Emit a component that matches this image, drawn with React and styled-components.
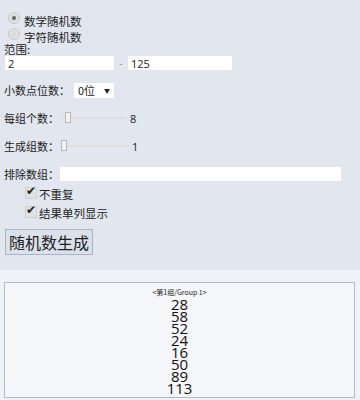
import styled, { createGlobalStyle } from "styled-components";

const GlobalStyle = createGlobalStyle`
  body {
    margin: 0;
    background: #eff2f6;
    font-family: "Noto Sans CJK SC", "Open Sans", sans-serif;
    font-size: 11px;
    color: #222;
  }
`;

const numbers = [28, 58, 52, 24, 16, 50, 89, 113];

const App = () => {
  return (
    <>
      <GlobalStyle />
      <Panel>
        <RadioLine>
          <Radio type="radio" name="kind" defaultChecked />
          数学随机数
        </RadioLine>
        <RadioLine>
          <Radio type="radio" name="kind" />
          字符随机数
        </RadioLine>
        <Label>范围:</Label>
        <RangeRow>
          <TextInput $width="111px" defaultValue="2" />
          <Dash>-</Dash>
          <TextInput $width="106px" defaultValue="125" />
        </RangeRow>
        <Row $top="11px">
          小数点位数：
          <Select>
            0位 <Arrow>▼</Arrow>
          </Select>
        </Row>
        <Row $top="12px">
          每组个数：
          <Slider $width="66px" type="range" min="1" max="100" defaultValue="8" />
          <Value>8</Value>
        </Row>
        <Row $top="12px">
          生成组数：
          <Slider $width="68px" type="range" min="1" max="100" defaultValue="1" />
          <Value>1</Value>
        </Row>
        <Row $top="12px">
          排除数组：
          <TextInput $width="283px" />
        </Row>
        <CheckLine $top="1px">
          <Check type="checkbox" defaultChecked />
          不重复
        </CheckLine>
        <CheckLine>
          <Check type="checkbox" defaultChecked />
          结果单列显示
        </CheckLine>
        <Button>随机数生成</Button>
      </Panel>
      <ResultArea>
        <ResultBox>
          <GroupTitle>&lt;第1组/Group 1&gt;</GroupTitle>
          {numbers.map((n, i) => (
            <Num key={i}>{n}</Num>
          ))}
        </ResultBox>
      </ResultArea>
    </>
  );
};

export default App;

const Panel = styled.div`
  background: #e1e6ef;
  height: 270px;
  box-sizing: border-box;
  padding: 13px 4px 0 4px;
`;

const RadioLine = styled.label`
  display: flex;
  align-items: center;
  height: 16px;
  font-size: 11.5px;
  margin-left: 4px;
`;

const Radio = styled.input`
  appearance: none;
  width: 12px;
  height: 12px;
  margin: 0 4px 0 0;
  border-radius: 50%;
  background: radial-gradient(circle, #d8d8d8 0, #e8e8e8 100%);
  border: 1px solid #c8c8c8;
  box-sizing: border-box;
  position: relative;
  top: -3px;
  &:checked::after {
    content: "";
    position: absolute;
    left: 3px;
    top: 3px;
    width: 4px;
    height: 4px;
    border-radius: 50%;
    background: #666;
  }
`;

const Label = styled.div`
  font-size: 11.5px;
  height: 14px;
  line-height: 14px;
  margin-top: -3px;
`;

const RangeRow = styled.div`
  display: flex;
  align-items: center;
  margin-top: -1px;
`;

const TextInput = styled.input`
  width: ${(p) => p.$width};
  height: 16px;
  box-sizing: border-box;
  border: 1px solid #e4e4ea;
  background: #fff;
  padding: 0 3px;
  font-family: "Open Sans", sans-serif;
  font-size: 11px;
  color: #222;
  outline: none;
`;

const Dash = styled.span`
  width: 12px;
  text-align: center;
  color: #999;
`;

const Row = styled.div`
  display: flex;
  align-items: center;
  margin-top: ${(p) => p.$top || "0"};
  height: 16px;
  font-size: 11px;
`;

const Select = styled.div`
  display: flex;
  align-items: center;
  justify-content: space-between;
  width: 40px;
  height: 15px;
  background: #fff;
  margin-left: 4px;
  padding: 0 4px;
  box-sizing: border-box;
  font-size: 11px;
`;

const Arrow = styled.span`
  font-size: 6px;
`;

const Slider = styled.input`
  appearance: none;
  width: ${(p) => p.$width};
  height: 14px;
  margin: 0 0 0 2px;
  background: transparent;
  &::-webkit-slider-runnable-track {
    height: 2px;
    background: #e3dcdc;
  }
  &::-webkit-slider-thumb {
    appearance: none;
    width: 6px;
    height: 11px;
    margin-top: -5px;
    background: #f2f2f2;
    border: 1px solid #b8b8b8;
    box-sizing: border-box;
  }
`;

const Value = styled.span`
  margin-left: 3px;
  font-family: "Open Sans", sans-serif;
  font-size: 11px;
`;

const CheckLine = styled.label`
  display: flex;
  align-items: flex-end;
  height: 19px;
  margin-left: 21px;
  margin-top: ${(p) => p.$top || "0"};
  font-size: 11.5px;
`;

const Check = styled.input`
  appearance: none;
  width: 12px;
  height: 12px;
  margin: 0 2px 3px 0;
  background: #e2e2e2;
  border: 1px solid #d0d0d0;
  box-sizing: border-box;
  position: relative;
  &:checked::after {
    content: "✔";
    position: absolute;
    left: 0px;
    top: -4px;
    font-size: 12px;
    color: #222;
  }
`;

const Button = styled.button`
  display: block;
  margin-top: 8px;
  margin-left: 1px;
  height: 26px;
  padding: 0 3px;
  background: #dbe1ea;
  border: 1px solid #a9b3c2;
  font-family: "Noto Sans CJK SC", sans-serif;
  font-size: 16px;
  line-height: 22px;
  color: #222;
`;

const ResultArea = styled.div`
  padding: 12px 5px 0 4px;
`;

const ResultBox = styled.div`
  border: 1px solid #b3bac4;
  background: #f4f6f9;
  height: 116px;
  box-sizing: border-box;
  text-align: center;
  padding-top: 4px;
  overflow: hidden;
`;

const GroupTitle = styled.div`
  font-family: "Noto Sans CJK SC", sans-serif;
  font-size: 7px;
  line-height: 11px;
`;

const Num = styled.div`
  font-family: "Open Sans", sans-serif;
  font-size: 15px;
  line-height: 12px;
  color: #111;
`;
